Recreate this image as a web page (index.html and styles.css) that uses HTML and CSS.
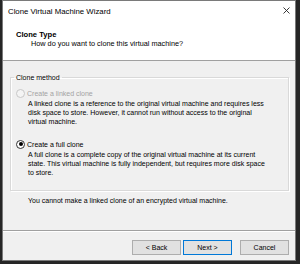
FILE: index.html
```html
<!DOCTYPE html>
<html lang="en">
<head>
  <meta charset="UTF-8" />
  <title>Clone Virtual Machine Wizard</title>
  <link rel="stylesheet" href="styles.css">
</head>
<body>

  <div class="window">
    <div class="titlebar">
      <span class="title">Clone Virtual Machine Wizard</span>
      <svg class="close" viewBox="0 0 7 7" width="7" height="7" aria-label="Close">
        <path d="M0.5 0.5 L6.5 6.5 M6.5 0.5 L0.5 6.5" stroke="#222" stroke-width="0.9" fill="none" />
      </svg>
    </div>

    <div class="header">
      <div class="step-title">Clone Type</div>
      <div class="step-desc">How do you want to clone this virtual machine?</div>
    </div>

    <div class="content">
      <fieldset class="group">
        <legend>Clone method</legend>

        <div class="option disabled">
          <span class="radio"></span>
          <span>Create a linked clone</span>
        </div>
        <p class="option-desc">A linked clone is a reference to the original virtual machine and requires less<br>disk space to store. However, it cannot run without access to the original<br>virtual machine.</p>

        <div class="option second">
          <span class="radio checked"></span>
          <span>Create a full clone</span>
        </div>
        <p class="option-desc">A full clone is a complete copy of the original virtual machine at its current<br>state. This virtual machine is fully independent, but requires more disk space<br>to store.</p>
      </fieldset>

      <p class="note">You cannot make a linked clone of an encrypted virtual machine.</p>
    </div>

    <div class="footer">
      <button class="btn">&lt; Back</button>
      <button class="btn default">Next &gt;</button>
      <button class="btn cancel">Cancel</button>
    </div>
  </div>

</body>
</html>
```

FILE: styles.css
```css
/* Reset */
* {
  margin: 0;
  padding: 0;
  box-sizing: border-box;
}

body {
  background-color: #262626;
  font-family: 'Liberation Sans', Arial, sans-serif;
  color: #000;
  overflow: hidden;
}

.window {
  width: 294px;
  height: 261px;
  margin-left: 2px;
  border: 1px solid #7a7a7a;
  background-color: #f0f0f0;
  display: flex;
  flex-direction: column;
}

/* Title bar */
.titlebar {
  height: 20px;
  background-color: #fff;
  display: flex;
  align-items: center;
  padding: 0 5px;
}

.title {
  font-size: 7.8px;
  line-height: 9px;
}

.close {
  margin-left: auto;
  margin-top: -1px;
}

/* Wizard header */
.header {
  height: 40px;
  background-color: #fff;
  border-bottom: 1px solid #a0a0a0;
  padding: 9px 0 0 13px;
}

.step-title {
  font-size: 7.6px;
  font-weight: 700;
  line-height: 9px;
}

.step-desc {
  font-size: 7.3px;
  line-height: 9px;
  margin: 0 0 0 15px;
}

/* Body */
.content {
  flex: 1;
  padding: 0 6px 0 7px;
  font-size: 7px;
}

.group {
  margin-top: 12px;
  border: 1px solid #d9d9d9;
  padding: 6px 0 13px 0;
  box-shadow: inset 1px 1px 0 #fff, 1px 1px 0 #fff;
}

.group legend {
  margin-left: 3px;
  padding: 0 2px;
  line-height: 9px;
}

.option {
  display: flex;
  align-items: center;
  gap: 2px;
  height: 10px;
  padding-left: 5px;
}

.option.second {
  margin-top: 13px;
}

.option.disabled {
  color: #a3a3a3;
}

.radio {
  width: 9px;
  height: 9px;
  border-radius: 50%;
  border: 1px solid #333;
  background-color: #fff;
  display: flex;
  align-items: center;
  justify-content: center;
}

.option.disabled .radio {
  border-color: #c8c8c8;
  background-color: #f4f4f4;
}

.radio.checked::after {
  content: "";
  width: 4px;
  height: 4px;
  border-radius: 50%;
  background-color: #000;
}

.option-desc {
  padding-left: 17px;
  margin-top: 1px;
  line-height: 9px;
  white-space: nowrap;
}

.note {
  margin-top: 5px;
  padding-left: 18px;
  line-height: 9px;
}

/* Buttons */
.footer {
  height: 30px;
  border-top: 1px solid #a0a0a0;
  box-shadow: inset 0 1px 0 #fff;
  display: flex;
  justify-content: flex-end;
  align-items: flex-start;
  gap: 2px;
  padding: 9px 6px 0 0;
}

.btn {
  width: 49px;
  height: 15px;
  background-color: #e1e1e1;
  border: 1px solid #adadad;
  font-family: 'Liberation Sans', Arial, sans-serif;
  font-size: 7px;
  color: #000;
}

.btn.default {
  border-color: #0078d7;
}

.btn.cancel {
  margin-left: 6px;
}
```
